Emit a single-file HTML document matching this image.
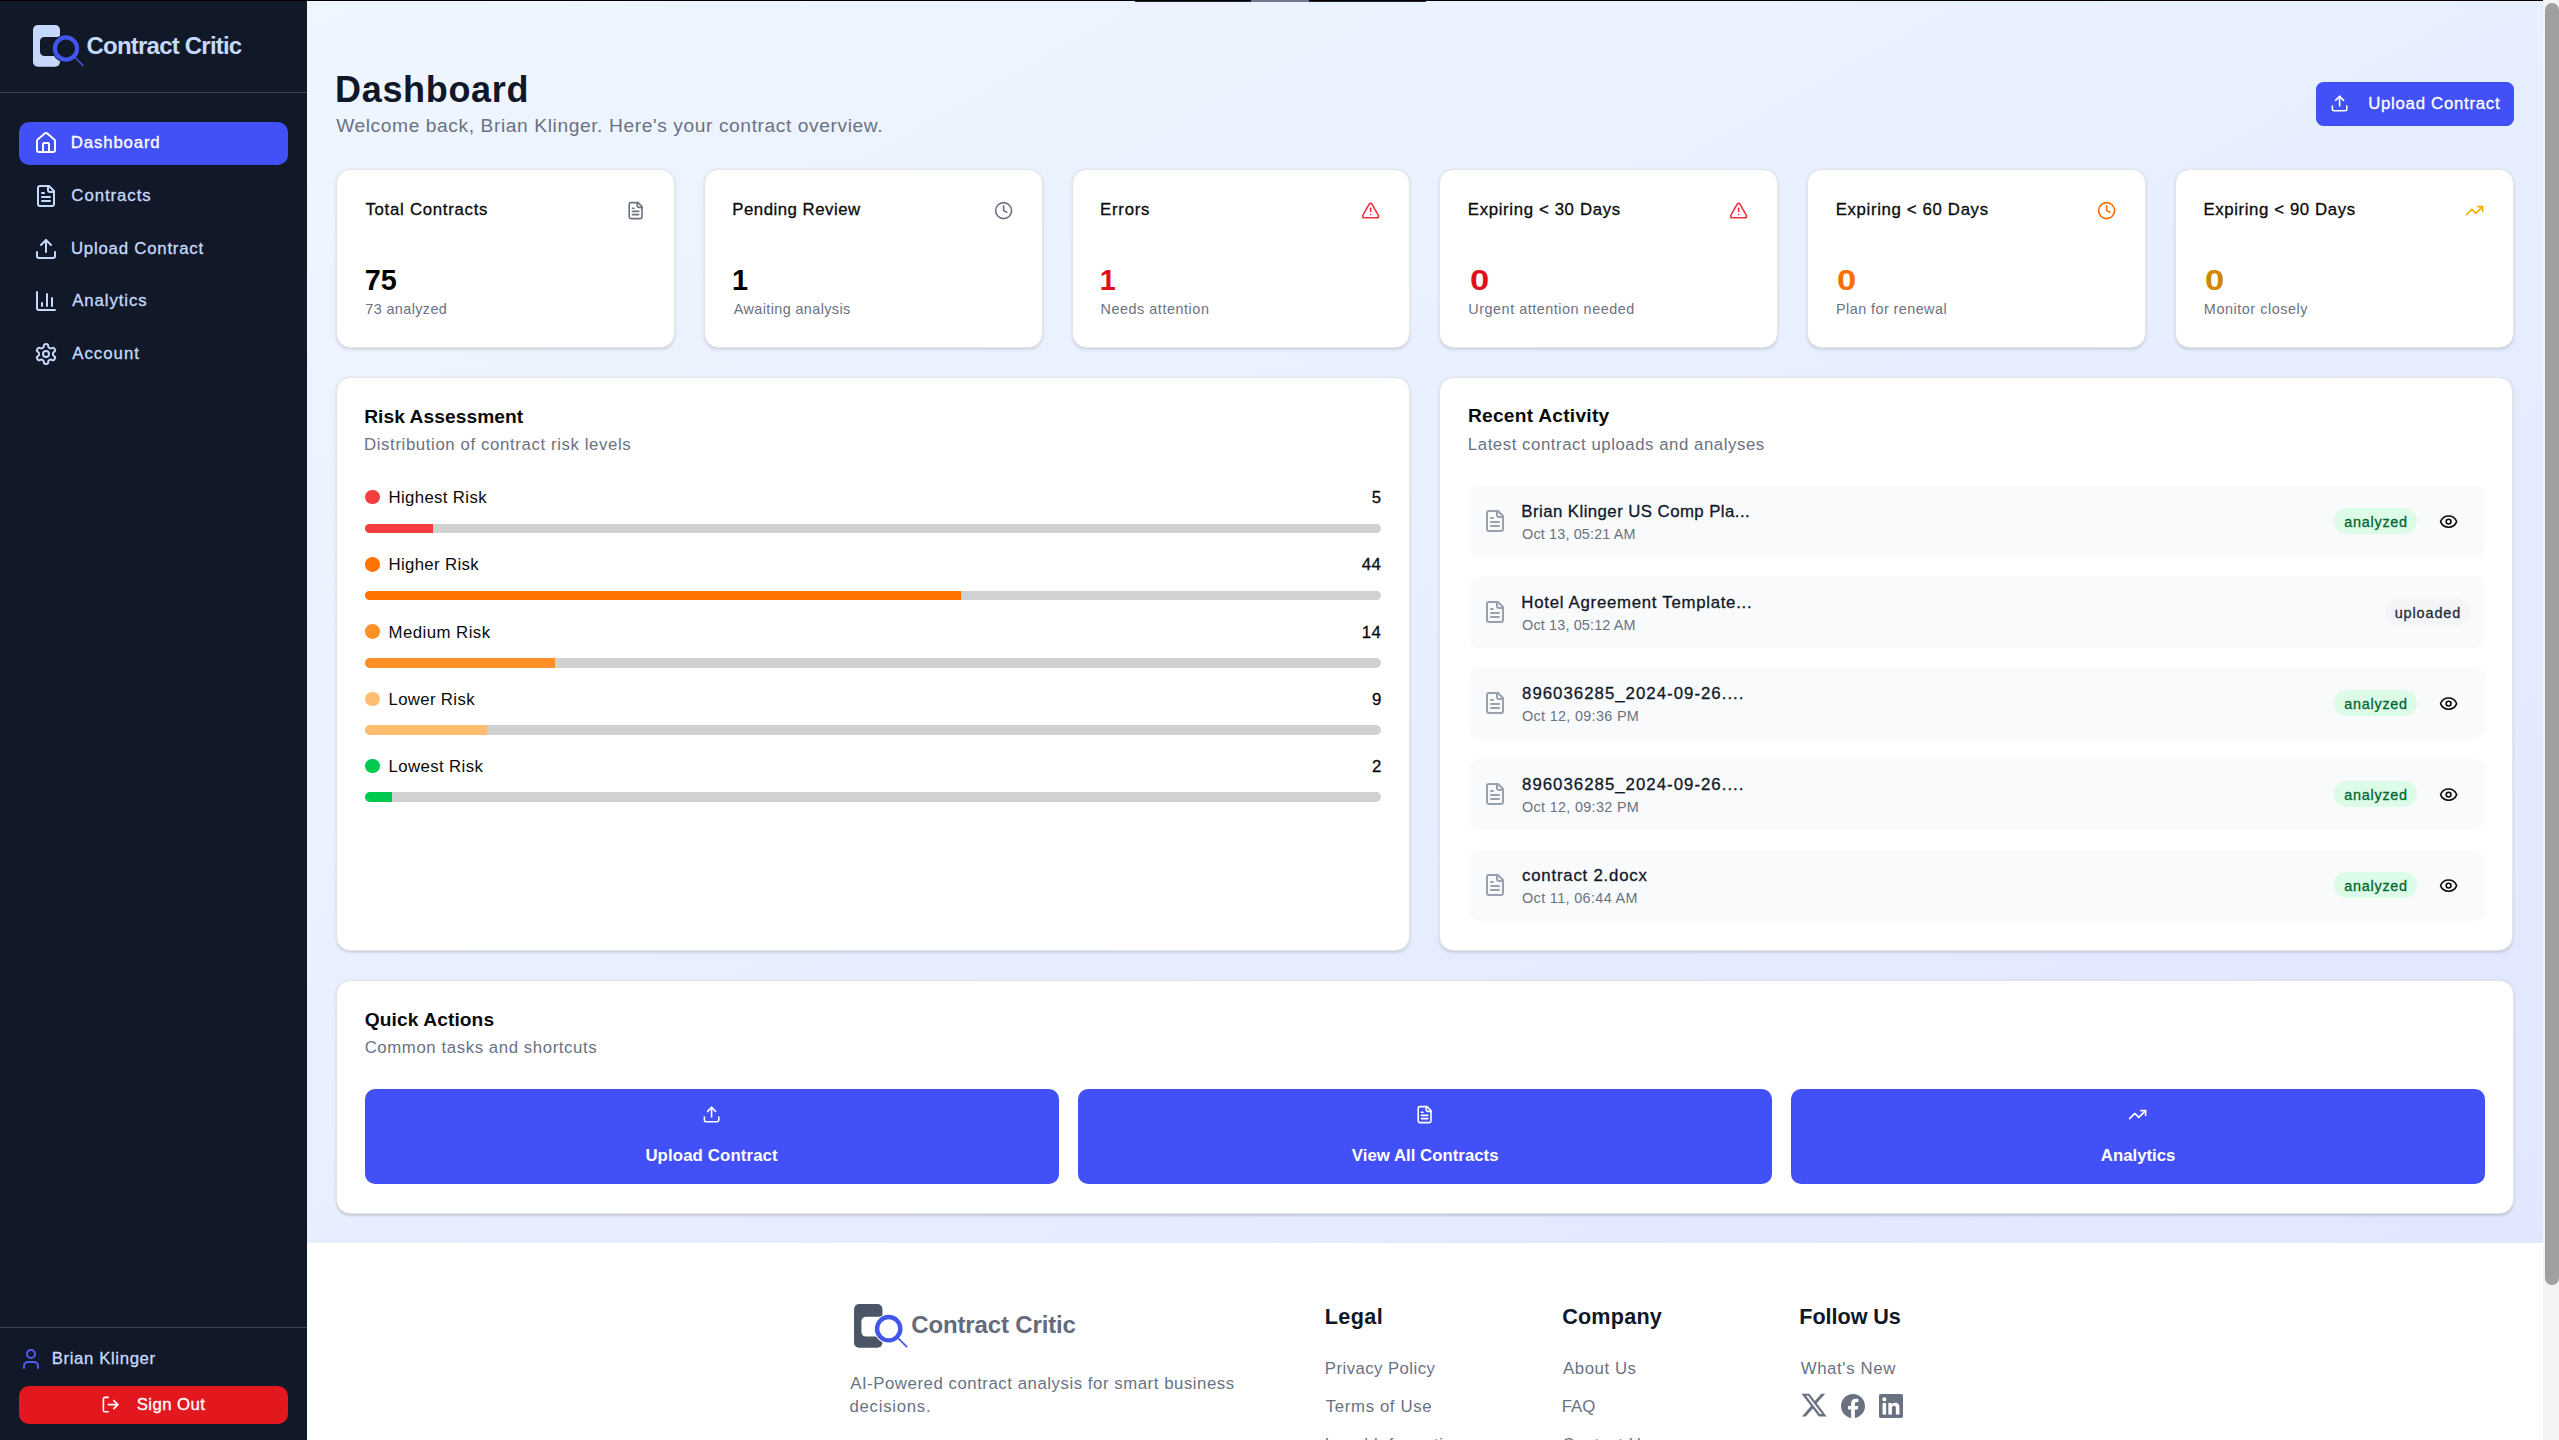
<!DOCTYPE html>
<html><head><meta charset="utf-8">
<style>
*{box-sizing:border-box;margin:0;padding:0}
html,body{width:2559px;height:1440px;overflow:hidden;background:#fff}
body{position:relative;font-family:"Liberation Sans",sans-serif}
.a{position:absolute}
.t{position:absolute;line-height:1;white-space:nowrap}
svg.i{position:absolute;fill:none;stroke:currentColor;stroke-linecap:round;stroke-linejoin:round}
.card{position:absolute;background:#fff;border:1.2px solid #e5e5e5;border-radius:14.4px;box-shadow:0 1.2px 3.6px rgba(0,0,0,.10),0 1.2px 2.4px -1.2px rgba(0,0,0,.10)}
</style></head><body>
<div class="a" style="left:0;top:0;width:307px;height:1440px;background:#111827">
<svg class="a" style="left:32.00px;top:24.00px;width:56.00px;height:46.00px" viewBox="0 0 56 46"><rect x="1" y="1" width="27" height="41.7" rx="4.8" fill="#c5d7fb"/><rect x="8" y="13" width="30" height="19" rx="4.5" fill="#111827"/><circle cx="34" cy="24.5" r="11.1" fill="#111827" stroke="#111827" stroke-width="6"/><circle cx="34" cy="24.5" r="11.1" fill="none" stroke="#4356eb" stroke-width="4.2"/><line x1="42" y1="32.5" x2="51.5" y2="42" stroke="#4356eb" stroke-width="1.6"/></svg>
<div class="t" style="left:86.54px;top:34px;font-size:24px;color:#c6dafd;font-weight:700;letter-spacing:-0.786px;">Contract Critic</div>
<div class="a" style="left:0.00px;top:92.00px;width:307.00px;height:1.20px;background:#374151;border-radius:0px;"></div>
<div class="a" style="left:19.00px;top:122.00px;width:269.00px;height:43.00px;background:#4150f7;border-radius:10px;"></div>
<svg class="i" style="left:34.00px;top:130.50px;width:24px;height:24px;color:#fff;" viewBox="0 0 24 24" stroke-width="2"><path d="M15 21v-8a1 1 0 0 0-1-1h-4a1 1 0 0 0-1 1v8"/><path d="M3 10a2 2 0 0 1 .709-1.528l7-5.999a2 2 0 0 1 2.582 0l7 5.999A2 2 0 0 1 21 10v9a2 2 0 0 1-2 2H5a2 2 0 0 1-2-2z"/></svg>
<div class="t" style="left:70.86px;top:135px;font-size:16.8px;color:#fff;-webkit-text-stroke:0.3px currentColor;letter-spacing:0.838px;">Dashboard</div>
<svg class="i" style="left:34.00px;top:184.30px;width:24px;height:24px;color:#c6dafd;" viewBox="0 0 24 24" stroke-width="2"><path d="M15 2H6a2 2 0 0 0-2 2v16a2 2 0 0 0 2 2h12a2 2 0 0 0 2-2V7Z"/><path d="M14 2v4a2 2 0 0 0 2 2h4"/><path d="M10 9H8"/><path d="M16 13H8"/><path d="M16 17H8"/></svg>
<div class="t" style="left:71.36px;top:188px;font-size:16.8px;color:#c6dafd;-webkit-text-stroke:0.3px currentColor;letter-spacing:0.940px;">Contracts</div>
<svg class="i" style="left:34.00px;top:237.10px;width:24px;height:24px;color:#c6dafd;" viewBox="0 0 24 24" stroke-width="2"><path d="M21 15v4a2 2 0 0 1-2 2H5a2 2 0 0 1-2-2v-4"/><polyline points="17 8 12 3 7 8"/><line x1="12" x2="12" y1="3" y2="15"/></svg>
<div class="t" style="left:70.94px;top:241px;font-size:16.8px;color:#c6dafd;-webkit-text-stroke:0.3px currentColor;letter-spacing:0.783px;">Upload Contract</div>
<svg class="i" style="left:34.00px;top:288.90px;width:24px;height:24px;color:#c6dafd;" viewBox="0 0 24 24" stroke-width="2"><path d="M3 3v16a2 2 0 0 0 2 2h16"/><path d="M18 17V9"/><path d="M13 17V5"/><path d="M8 17v-3"/></svg>
<div class="t" style="left:72.20px;top:293px;font-size:16.8px;color:#c6dafd;-webkit-text-stroke:0.3px currentColor;letter-spacing:0.924px;">Analytics</div>
<svg class="i" style="left:34.00px;top:342.00px;width:24px;height:24px;color:#c6dafd;" viewBox="0 0 24 24" stroke-width="2"><path d="M12.22 2h-.44a2 2 0 0 0-2 2v.18a2 2 0 0 1-1 1.73l-.43.25a2 2 0 0 1-2 0l-.15-.08a2 2 0 0 0-2.730.73l-.22.38a2 2 0 0 0 .73 2.73l.15.1a2 2 0 0 1 1 1.72v.51a2 2 0 0 1-1 1.74l-.15.09a2 2 0 0 0-.73 2.73l.22.38a2 2 0 0 0 2.73.73l.15-.08a2 2 0 0 1 2 0l.43.25a2 2 0 0 1 1 1.73V20a2 2 0 0 0 2 2h.44a2 2 0 0 0 2-2v-.18a2 2 0 0 1 1-1.73l.43-.25a2 2 0 0 1 2 0l.15.08a2 2 0 0 0 2.73-.73l.22-.39a2 2 0 0 0-.73-2.73l-.15-.08a2 2 0 0 1-1-1.74v-.5a2 2 0 0 1 1-1.74l.15-.09a2 2 0 0 0 .73-2.73l-.22-.38a2 2 0 0 0-2.73-.73l-.15.08a2 2 0 0 1-2 0l-.43-.25a2 2 0 0 1-1-1.73V4a2 2 0 0 0-2-2z"/><circle cx="12" cy="12" r="3"/></svg>
<div class="t" style="left:72.20px;top:346px;font-size:16.8px;color:#c6dafd;-webkit-text-stroke:0.3px currentColor;letter-spacing:1.023px;">Account</div>
<div class="a" style="left:0.00px;top:1327.00px;width:307.00px;height:1.20px;background:#374151;border-radius:0px;"></div>
<svg class="i" style="left:19.00px;top:1347.00px;width:24px;height:24px;color:#4f5cf6;" viewBox="0 0 24 24" stroke-width="2"><path d="M19 21v-2a4 4 0 0 0-4-4H9a4 4 0 0 0-4 4v2"/><circle cx="12" cy="7" r="4"/></svg>
<div class="t" style="left:51.66px;top:1351px;font-size:16.8px;color:#c6dafd;-webkit-text-stroke:0.3px currentColor;letter-spacing:0.618px;">Brian Klinger</div>
<div class="a" style="left:19.00px;top:1386.00px;width:269.00px;height:38.00px;background:#e3181f;border-radius:10px;"></div>
<svg class="i" style="left:101.00px;top:1394.50px;width:19.2px;height:19.2px;color:#fff;" viewBox="0 0 24 24" stroke-width="2"><path d="M9 21H5a2 2 0 0 1-2-2V5a2 2 0 0 1 2-2h4"/><polyline points="16 17 21 12 16 7"/><line x1="21" x2="9" y1="12" y2="12"/></svg>
<div class="t" style="left:136.74px;top:1397px;font-size:16.8px;color:#fff;-webkit-text-stroke:0.3px currentColor;letter-spacing:0.427px;">Sign Out</div>
</div>
<div class="a" style="left:307px;top:0;width:2236px;height:1243px;background:linear-gradient(to bottom right,#eff6ff,#e0e7ff)"></div>
<div class="t" style="left:335.06px;top:72px;font-size:36px;color:#101828;font-weight:700;letter-spacing:0.670px;">Dashboard</div>
<div class="t" style="left:336.15px;top:116px;font-size:19.2px;color:#6a7282;letter-spacing:0.594px;">Welcome back, Brian Klinger. Here&#x27;s your contract overview.</div>
<div class="a" style="left:2316.00px;top:82.00px;width:198.00px;height:44.00px;background:#4150f7;border-radius:7.5px;"></div>
<svg class="i" style="left:2329.50px;top:93.70px;width:19.2px;height:19.2px;color:#fff;" viewBox="0 0 24 24" stroke-width="2"><path d="M21 15v4a2 2 0 0 1-2 2H5a2 2 0 0 1-2-2v-4"/><polyline points="17 8 12 3 7 8"/><line x1="12" x2="12" y1="3" y2="15"/></svg>
<div class="t" style="left:2368.14px;top:96px;font-size:16.8px;color:#fff;-webkit-text-stroke:0.3px currentColor;letter-spacing:0.733px;">Upload Contract</div>
<div class="card" style="left:336.00px;top:169px;width:338.8px;height:179px"></div>
<div class="t" style="left:365.46px;top:202px;font-size:16.8px;color:#0a0a0a;-webkit-text-stroke:0.3px currentColor;letter-spacing:0.719px;">Total Contracts</div>
<svg class="i" style="left:625.80px;top:201.00px;width:19.2px;height:19.2px;color:#6b7280;" viewBox="0 0 24 24" stroke-width="2"><path d="M15 2H6a2 2 0 0 0-2 2v16a2 2 0 0 0 2 2h12a2 2 0 0 0 2-2V7Z"/><path d="M14 2v4a2 2 0 0 0 2 2h4"/><path d="M10 9H8"/><path d="M16 13H8"/><path d="M16 17H8"/></svg>
<div class="t" style="left:364.85px;top:266px;font-size:28.8px;color:#000;font-weight:700;">75</div>
<div class="t" style="left:365.28px;top:302px;font-size:14.4px;color:#6a7282;letter-spacing:0.397px;">73 analyzed</div>
<div class="card" style="left:703.80px;top:169px;width:338.8px;height:179px"></div>
<div class="t" style="left:732.26px;top:202px;font-size:16.8px;color:#0a0a0a;-webkit-text-stroke:0.3px currentColor;letter-spacing:0.514px;">Pending Review</div>
<svg class="i" style="left:993.60px;top:201.00px;width:19.2px;height:19.2px;color:#6b7280;" viewBox="0 0 24 24" stroke-width="2"><circle cx="12" cy="12" r="10"/><polyline points="12 6 12 12 16 14"/></svg>
<div class="t" style="left:732.07px;top:266px;font-size:28.8px;color:#000;font-weight:700;">1</div>
<div class="t" style="left:733.80px;top:302px;font-size:14.4px;color:#6a7282;letter-spacing:0.392px;">Awaiting analysis</div>
<div class="card" style="left:1071.60px;top:169px;width:338.8px;height:179px"></div>
<div class="t" style="left:1100.06px;top:202px;font-size:16.8px;color:#0a0a0a;-webkit-text-stroke:0.3px currentColor;letter-spacing:0.747px;">Errors</div>
<svg class="i" style="left:1361.40px;top:201.00px;width:19.2px;height:19.2px;color:#f0313b;" viewBox="0 0 24 24" stroke-width="2"><path d="m21.73 18-8-14a2 2 0 0 0-3.48 0l-8 14A2 2 0 0 0 4 21h16a2 2 0 0 0 1.73-3"/><path d="M12 9v4"/><path d="M12 17h.01"/></svg>
<div class="t" style="left:1099.87px;top:266px;font-size:28.8px;color:#e0101a;font-weight:700;">1</div>
<div class="t" style="left:1100.45px;top:302px;font-size:14.4px;color:#6a7282;letter-spacing:0.546px;">Needs attention</div>
<div class="card" style="left:1439.40px;top:169px;width:338.8px;height:179px"></div>
<div class="t" style="left:1467.86px;top:202px;font-size:16.8px;color:#0a0a0a;-webkit-text-stroke:0.3px currentColor;letter-spacing:0.640px;">Expiring &lt; 30 Days</div>
<svg class="i" style="left:1729.20px;top:201.00px;width:19.2px;height:19.2px;color:#f0313b;" viewBox="0 0 24 24" stroke-width="2"><path d="m21.73 18-8-14a2 2 0 0 0-3.48 0l-8 14A2 2 0 0 0 4 21h16a2 2 0 0 0 1.73-3"/><path d="M12 9v4"/><path d="M12 17h.01"/></svg>
<div class="t" style="left:1469.52px;top:266px;font-size:28.8px;color:#e0101a;font-weight:700;transform:scale(1.2,1.05);transform-origin:0 24px;">0</div>
<div class="t" style="left:1468.32px;top:302px;font-size:14.4px;color:#6a7282;letter-spacing:0.524px;">Urgent attention needed</div>
<div class="card" style="left:1807.20px;top:169px;width:338.8px;height:179px"></div>
<div class="t" style="left:1835.66px;top:202px;font-size:16.8px;color:#0a0a0a;-webkit-text-stroke:0.3px currentColor;letter-spacing:0.652px;">Expiring &lt; 60 Days</div>
<svg class="i" style="left:2097.00px;top:201.00px;width:19.2px;height:19.2px;color:#ff6a00;" viewBox="0 0 24 24" stroke-width="2"><circle cx="12" cy="12" r="10"/><polyline points="12 6 12 12 16 14"/></svg>
<div class="t" style="left:1837.32px;top:266px;font-size:28.8px;color:#ff6c00;font-weight:700;transform:scale(1.2,1.05);transform-origin:0 24px;">0</div>
<div class="t" style="left:1836.05px;top:302px;font-size:14.4px;color:#6a7282;letter-spacing:0.437px;">Plan for renewal</div>
<div class="card" style="left:2175.00px;top:169px;width:338.8px;height:179px"></div>
<div class="t" style="left:2203.46px;top:202px;font-size:16.8px;color:#0a0a0a;-webkit-text-stroke:0.3px currentColor;letter-spacing:0.610px;">Expiring &lt; 90 Days</div>
<svg class="i" style="left:2464.80px;top:201.00px;width:19.2px;height:19.2px;color:#f0b100;" viewBox="0 0 24 24" stroke-width="2"><polyline points="22 7 13.5 15.5 8.5 10.5 2 17"/><polyline points="16 7 22 7 22 13"/></svg>
<div class="t" style="left:2205.12px;top:266px;font-size:28.8px;color:#d08700;font-weight:700;transform:scale(1.2,1.05);transform-origin:0 24px;">0</div>
<div class="t" style="left:2203.85px;top:302px;font-size:14.4px;color:#6a7282;letter-spacing:0.550px;">Monitor closely</div>
<div class="card" style="left:336px;top:377px;width:1073.6px;height:574px"></div>
<div class="t" style="left:364.15px;top:407px;font-size:19.2px;color:#0a0a0a;font-weight:700;letter-spacing:0.059px;">Risk Assessment</div>
<div class="t" style="left:364.06px;top:437px;font-size:16.8px;color:#6a7282;letter-spacing:0.611px;">Distribution of contract risk levels</div>
<div class="a" style="left:365.20px;top:489.90px;width:14.60px;height:14.60px;background:#f53c3f;border-radius:7.3px;"></div>
<div class="t" style="left:388.46px;top:490px;font-size:16.8px;color:#0a0a0a;letter-spacing:0.356px;">Highest Risk</div>
<div class="t" style="left:1371.85px;top:490px;font-size:16.8px;color:#0a0a0a;-webkit-text-stroke:0.3px currentColor;letter-spacing:0.400px;">5</div>
<div class="a" style="left:365px;top:523.60px;width:1016px;height:9.6px;background:#d1d1d1;border-radius:5px;overflow:hidden"><div style="width:67.73px;height:100%;background:#f53c3f"></div></div>
<div class="a" style="left:365.20px;top:557.10px;width:14.60px;height:14.60px;background:#ff7300;border-radius:7.3px;"></div>
<div class="t" style="left:388.46px;top:557px;font-size:16.8px;color:#0a0a0a;letter-spacing:0.349px;">Higher Risk</div>
<div class="t" style="left:1361.87px;top:557px;font-size:16.8px;color:#0a0a0a;-webkit-text-stroke:0.3px currentColor;letter-spacing:0.400px;">44</div>
<div class="a" style="left:365px;top:590.80px;width:1016px;height:9.6px;background:#d1d1d1;border-radius:5px;overflow:hidden"><div style="width:596.05px;height:100%;background:#ff7300"></div></div>
<div class="a" style="left:365.20px;top:624.30px;width:14.60px;height:14.60px;background:#ff9026;border-radius:7.3px;"></div>
<div class="t" style="left:388.46px;top:625px;font-size:16.8px;color:#0a0a0a;letter-spacing:0.464px;">Medium Risk</div>
<div class="t" style="left:1361.87px;top:625px;font-size:16.8px;color:#0a0a0a;-webkit-text-stroke:0.3px currentColor;letter-spacing:0.400px;">14</div>
<div class="a" style="left:365px;top:658.00px;width:1016px;height:9.6px;background:#d1d1d1;border-radius:5px;overflow:hidden"><div style="width:189.65px;height:100%;background:#ff9026"></div></div>
<div class="a" style="left:365.20px;top:691.50px;width:14.60px;height:14.60px;background:#ffbd6f;border-radius:7.3px;"></div>
<div class="t" style="left:388.46px;top:692px;font-size:16.8px;color:#0a0a0a;letter-spacing:0.341px;">Lower Risk</div>
<div class="t" style="left:1371.93px;top:692px;font-size:16.8px;color:#0a0a0a;-webkit-text-stroke:0.3px currentColor;letter-spacing:0.400px;">9</div>
<div class="a" style="left:365px;top:725.20px;width:1016px;height:9.6px;background:#d1d1d1;border-radius:5px;overflow:hidden"><div style="width:121.92px;height:100%;background:#ffbd6f"></div></div>
<div class="a" style="left:365.20px;top:758.70px;width:14.60px;height:14.60px;background:#00c950;border-radius:7.3px;"></div>
<div class="t" style="left:388.46px;top:759px;font-size:16.8px;color:#0a0a0a;letter-spacing:0.389px;">Lowest Risk</div>
<div class="t" style="left:1372.02px;top:759px;font-size:16.8px;color:#0a0a0a;-webkit-text-stroke:0.3px currentColor;letter-spacing:0.400px;">2</div>
<div class="a" style="left:365px;top:792.40px;width:1016px;height:9.6px;background:#d1d1d1;border-radius:5px;overflow:hidden"><div style="width:27.09px;height:100%;background:#00c950"></div></div>
<div class="card" style="left:1439.2px;top:377px;width:1074px;height:574px"></div>
<div class="t" style="left:1467.95px;top:406px;font-size:19.2px;color:#0a0a0a;font-weight:700;letter-spacing:0.242px;">Recent Activity</div>
<div class="t" style="left:1467.86px;top:437px;font-size:16.8px;color:#6a7282;letter-spacing:0.550px;">Latest contract uploads and analyses</div>
<div class="a" style="left:1469.00px;top:486.00px;width:1015.70px;height:71.00px;background:#f9fafb;border-radius:10px;"></div>
<svg class="i" style="left:1483.00px;top:509.00px;width:24px;height:24px;color:#99a1af;" viewBox="0 0 24 24" stroke-width="2"><path d="M15 2H6a2 2 0 0 0-2 2v16a2 2 0 0 0 2 2h12a2 2 0 0 0 2-2V7Z"/><path d="M14 2v4a2 2 0 0 0 2 2h4"/><path d="M10 9H8"/><path d="M16 13H8"/><path d="M16 17H8"/></svg>
<div class="t" style="left:1521.36px;top:504px;font-size:16.8px;color:#101828;-webkit-text-stroke:0.3px currentColor;letter-spacing:0.441px;">Brian Klinger US Comp Pla...</div>
<div class="t" style="left:1522.05px;top:527px;font-size:14.4px;color:#6a7282;letter-spacing:0.157px;">Oct 13, 05:21 AM</div>
<div class="a" style="left:2334.00px;top:508.00px;width:83.00px;height:26.00px;background:#dcfce7;border-radius:13px;"></div>
<div class="t" style="left:2344.32px;top:515px;font-size:14.4px;color:#016630;-webkit-text-stroke:0.3px currentColor;letter-spacing:0.734px;">analyzed</div>
<svg class="i" style="left:2438.50px;top:511.90px;width:19.2px;height:19.2px;color:#0a0a0a;" viewBox="0 0 24 24" stroke-width="2"><path d="M2.062 12.348a1 1 0 0 1 0-.696 10.75 10.75 0 0 1 19.876 0 1 1 0 0 1 0 .696 10.75 10.75 0 0 1-19.876 0"/><circle cx="12" cy="12" r="3"/></svg>
<div class="a" style="left:1469.00px;top:577.00px;width:1015.70px;height:71.00px;background:#f9fafb;border-radius:10px;"></div>
<svg class="i" style="left:1483.00px;top:600.00px;width:24px;height:24px;color:#99a1af;" viewBox="0 0 24 24" stroke-width="2"><path d="M15 2H6a2 2 0 0 0-2 2v16a2 2 0 0 0 2 2h12a2 2 0 0 0 2-2V7Z"/><path d="M14 2v4a2 2 0 0 0 2 2h4"/><path d="M10 9H8"/><path d="M16 13H8"/><path d="M16 17H8"/></svg>
<div class="t" style="left:1521.36px;top:595px;font-size:16.8px;color:#101828;-webkit-text-stroke:0.3px currentColor;letter-spacing:0.722px;">Hotel Agreement Template...</div>
<div class="t" style="left:1522.05px;top:618px;font-size:14.4px;color:#6a7282;letter-spacing:0.157px;">Oct 13, 05:12 AM</div>
<div class="a" style="left:2385.00px;top:599.00px;width:84.50px;height:26.00px;background:#f3f4f6;border-radius:13px;"></div>
<div class="t" style="left:2394.66px;top:606px;font-size:14.4px;color:#1e2939;-webkit-text-stroke:0.3px currentColor;letter-spacing:0.906px;">uploaded</div>
<div class="a" style="left:1469.00px;top:668.00px;width:1015.70px;height:71.00px;background:#f9fafb;border-radius:10px;"></div>
<svg class="i" style="left:1483.00px;top:691.00px;width:24px;height:24px;color:#99a1af;" viewBox="0 0 24 24" stroke-width="2"><path d="M15 2H6a2 2 0 0 0-2 2v16a2 2 0 0 0 2 2h12a2 2 0 0 0 2-2V7Z"/><path d="M14 2v4a2 2 0 0 0 2 2h4"/><path d="M10 9H8"/><path d="M16 13H8"/><path d="M16 17H8"/></svg>
<div class="t" style="left:1522.03px;top:686px;font-size:16.8px;color:#101828;-webkit-text-stroke:0.3px currentColor;letter-spacing:1.027px;">896036285_2024-09-26....</div>
<div class="t" style="left:1522.05px;top:709px;font-size:14.4px;color:#6a7282;letter-spacing:0.318px;">Oct 12, 09:36 PM</div>
<div class="a" style="left:2334.00px;top:690.00px;width:83.00px;height:26.00px;background:#dcfce7;border-radius:13px;"></div>
<div class="t" style="left:2344.32px;top:697px;font-size:14.4px;color:#016630;-webkit-text-stroke:0.3px currentColor;letter-spacing:0.734px;">analyzed</div>
<svg class="i" style="left:2438.50px;top:693.90px;width:19.2px;height:19.2px;color:#0a0a0a;" viewBox="0 0 24 24" stroke-width="2"><path d="M2.062 12.348a1 1 0 0 1 0-.696 10.75 10.75 0 0 1 19.876 0 1 1 0 0 1 0 .696 10.75 10.75 0 0 1-19.876 0"/><circle cx="12" cy="12" r="3"/></svg>
<div class="a" style="left:1469.00px;top:759.00px;width:1015.70px;height:71.00px;background:#f9fafb;border-radius:10px;"></div>
<svg class="i" style="left:1483.00px;top:782.00px;width:24px;height:24px;color:#99a1af;" viewBox="0 0 24 24" stroke-width="2"><path d="M15 2H6a2 2 0 0 0-2 2v16a2 2 0 0 0 2 2h12a2 2 0 0 0 2-2V7Z"/><path d="M14 2v4a2 2 0 0 0 2 2h4"/><path d="M10 9H8"/><path d="M16 13H8"/><path d="M16 17H8"/></svg>
<div class="t" style="left:1522.03px;top:777px;font-size:16.8px;color:#101828;-webkit-text-stroke:0.3px currentColor;letter-spacing:1.027px;">896036285_2024-09-26....</div>
<div class="t" style="left:1522.05px;top:800px;font-size:14.4px;color:#6a7282;letter-spacing:0.318px;">Oct 12, 09:32 PM</div>
<div class="a" style="left:2334.00px;top:781.00px;width:83.00px;height:26.00px;background:#dcfce7;border-radius:13px;"></div>
<div class="t" style="left:2344.32px;top:788px;font-size:14.4px;color:#016630;-webkit-text-stroke:0.3px currentColor;letter-spacing:0.734px;">analyzed</div>
<svg class="i" style="left:2438.50px;top:784.90px;width:19.2px;height:19.2px;color:#0a0a0a;" viewBox="0 0 24 24" stroke-width="2"><path d="M2.062 12.348a1 1 0 0 1 0-.696 10.75 10.75 0 0 1 19.876 0 1 1 0 0 1 0 .696 10.75 10.75 0 0 1-19.876 0"/><circle cx="12" cy="12" r="3"/></svg>
<div class="a" style="left:1469.00px;top:850.00px;width:1015.70px;height:71.00px;background:#f9fafb;border-radius:10px;"></div>
<svg class="i" style="left:1483.00px;top:873.00px;width:24px;height:24px;color:#99a1af;" viewBox="0 0 24 24" stroke-width="2"><path d="M15 2H6a2 2 0 0 0-2 2v16a2 2 0 0 0 2 2h12a2 2 0 0 0 2-2V7Z"/><path d="M14 2v4a2 2 0 0 0 2 2h4"/><path d="M10 9H8"/><path d="M16 13H8"/><path d="M16 17H8"/></svg>
<div class="t" style="left:1522.03px;top:868px;font-size:16.8px;color:#101828;-webkit-text-stroke:0.3px currentColor;letter-spacing:0.788px;">contract 2.docx</div>
<div class="t" style="left:1522.05px;top:891px;font-size:14.4px;color:#6a7282;letter-spacing:0.356px;">Oct 11, 06:44 AM</div>
<div class="a" style="left:2334.00px;top:872.00px;width:83.00px;height:26.00px;background:#dcfce7;border-radius:13px;"></div>
<div class="t" style="left:2344.32px;top:879px;font-size:14.4px;color:#016630;-webkit-text-stroke:0.3px currentColor;letter-spacing:0.734px;">analyzed</div>
<svg class="i" style="left:2438.50px;top:875.90px;width:19.2px;height:19.2px;color:#0a0a0a;" viewBox="0 0 24 24" stroke-width="2"><path d="M2.062 12.348a1 1 0 0 1 0-.696 10.75 10.75 0 0 1 19.876 0 1 1 0 0 1 0 .696 10.75 10.75 0 0 1-19.876 0"/><circle cx="12" cy="12" r="3"/></svg>
<div class="card" style="left:336px;top:980px;width:2177.6px;height:234px"></div>
<div class="t" style="left:364.73px;top:1010px;font-size:19.2px;color:#0a0a0a;font-weight:700;letter-spacing:0.090px;">Quick Actions</div>
<div class="t" style="left:364.66px;top:1040px;font-size:16.8px;color:#6a7282;letter-spacing:0.587px;">Common tasks and shortcuts</div>
<div class="a" style="left:365.00px;top:1089.00px;width:694.00px;height:95.00px;background:#4150f7;border-radius:10px;"></div>
<svg class="i" style="left:702.40px;top:1104.80px;width:19.2px;height:19.2px;color:#fff;" viewBox="0 0 24 24" stroke-width="2"><path d="M21 15v4a2 2 0 0 1-2 2H5a2 2 0 0 1-2-2v-4"/><polyline points="17 8 12 3 7 8"/><line x1="12" x2="12" y1="3" y2="15"/></svg>
<div class="t" style="left:645.39px;top:1148px;font-size:16.8px;color:#fff;font-weight:700;letter-spacing:0.125px;">Upload Contract</div>
<div class="a" style="left:1078.00px;top:1089.00px;width:694.00px;height:95.00px;background:#4150f7;border-radius:10px;"></div>
<svg class="i" style="left:1415.40px;top:1104.80px;width:19.2px;height:19.2px;color:#fff;" viewBox="0 0 24 24" stroke-width="2"><path d="M15 2H6a2 2 0 0 0-2 2v16a2 2 0 0 0 2 2h12a2 2 0 0 0 2-2V7Z"/><path d="M14 2v4a2 2 0 0 0 2 2h4"/><path d="M10 9H8"/><path d="M16 13H8"/><path d="M16 17H8"/></svg>
<div class="t" style="left:1351.87px;top:1148px;font-size:16.8px;color:#fff;font-weight:700;letter-spacing:0.016px;">View All Contracts</div>
<div class="a" style="left:1791.00px;top:1089.00px;width:694.00px;height:95.00px;background:#4150f7;border-radius:10px;"></div>
<svg class="i" style="left:2128.40px;top:1104.80px;width:19.2px;height:19.2px;color:#fff;" viewBox="0 0 24 24" stroke-width="2"><polyline points="22 7 13.5 15.5 8.5 10.5 2 17"/><polyline points="16 7 22 7 22 13"/></svg>
<div class="t" style="left:2100.79px;top:1148px;font-size:16.8px;color:#fff;font-weight:700;">Analytics</div>

<div class="a" style="left:307px;top:1243px;width:2236px;height:197px;background:#fff"></div>
<svg class="a" style="left:853.35px;top:1303.35px;width:58.80px;height:48.30px" viewBox="0 0 56 46"><rect x="1" y="1" width="27" height="41.7" rx="4.8" fill="#4a5565"/><rect x="8" y="13" width="30" height="19" rx="4.5" fill="#ffffff"/><circle cx="34" cy="24.5" r="11.1" fill="#ffffff" stroke="#ffffff" stroke-width="6"/><circle cx="34" cy="24.5" r="11.1" fill="none" stroke="#4356eb" stroke-width="4.2"/><line x1="42" y1="32.5" x2="51.5" y2="42" stroke="#4356eb" stroke-width="1.6"/></svg>
<div class="t" style="left:911.34px;top:1313px;font-size:24px;color:#636b7c;font-weight:700;letter-spacing:-0.150px;">Contract Critic</div>
<div class="t" style="left:850.20px;top:1376px;font-size:16.8px;color:#6a7282;letter-spacing:0.541px;">AI-Powered contract analysis for smart business</div>
<div class="t" style="left:849.53px;top:1399px;font-size:16.8px;color:#6a7282;letter-spacing:0.714px;">decisions.</div>
<div class="t" style="left:1324.80px;top:1306px;font-size:21.6px;color:#101828;font-weight:700;letter-spacing:0.358px;">Legal</div>
<div class="t" style="left:1324.86px;top:1361px;font-size:16.8px;color:#6a7282;letter-spacing:0.428px;">Privacy Policy</div>
<div class="t" style="left:1325.86px;top:1399px;font-size:16.8px;color:#6a7282;letter-spacing:0.619px;">Terms of Use</div>
<div class="t" style="left:1324.86px;top:1437px;font-size:16.8px;color:#6a7282;letter-spacing:0.504px;">Legal Information</div>
<div class="t" style="left:1562.14px;top:1306px;font-size:21.6px;color:#101828;font-weight:700;letter-spacing:0.222px;">Company</div>
<div class="t" style="left:1563.00px;top:1361px;font-size:16.8px;color:#6a7282;letter-spacing:0.565px;">About Us</div>
<div class="t" style="left:1561.66px;top:1399px;font-size:16.8px;color:#6a7282;">FAQ</div>
<div class="t" style="left:1562.16px;top:1437px;font-size:16.8px;color:#6a7282;letter-spacing:0.504px;">Contact Us</div>
<div class="t" style="left:1799.35px;top:1306px;font-size:21.6px;color:#101828;font-weight:700;letter-spacing:-0.054px;">Follow Us</div>
<div class="t" style="left:1800.67px;top:1361px;font-size:16.8px;color:#6a7282;letter-spacing:0.634px;">What&#x27;s New</div>
<svg class="a" style="left:1799.5px;top:1391.1px;width:28px;height:28px" viewBox="0 0 24 24"><path fill="#6a7282" d="M18.244 2.25h3.308l-7.227 8.26 8.502 11.24H16.17l-5.214-6.817L4.99 21.75H1.68l7.73-8.835L1.254 2.25H8.08l4.713 6.231zm-1.161 17.52h1.833L7.084 4.126H5.117z"/></svg>
<svg class="a" style="left:1841px;top:1393.5px;width:24px;height:24px" viewBox="0 0 24 24"><path fill="#6a7282" d="M24 12.073C24 5.405 18.627 0 12 0S0 5.405 0 12.073C0 18.1 4.388 23.094 10.125 24v-8.437H7.078v-3.49h3.047V9.410c0-3.025 1.792-4.697 4.533-4.697 1.312 0 2.686.236 2.686.236v2.971H15.830c-1.491 0-1.956.93-1.956 1.886v2.264h3.328l-.532 3.490h-2.796V24C19.612 23.094 24 18.100 24 12.073z"/></svg>
<svg class="a" style="left:1879px;top:1393.5px;width:24px;height:24px" viewBox="0 0 24 24"><path fill="#6a7282" d="M20.447 20.452h-3.554v-5.569c0-1.328-.027-3.037-1.852-3.037-1.853 0-2.136 1.445-2.136 2.939v5.667H9.351V9h3.414v1.561h.046c.477-.9 1.637-1.850 3.370-1.850 3.601 0 4.267 2.370 4.267 5.455v6.286zM5.337 7.433a2.062 2.062 0 1 1 0-4.125 2.062 2.062 0 0 1 0 4.125zM7.119 20.452H3.555V9h3.564v11.452zM22.225 0H1.771C.792 0 0 .774 0 1.729v20.542C0 23.227.792 24 1.771 24h20.451C23.200 24 24 23.227 24 22.271V1.729C24 .774 23.200 0 22.222 0h.003z"/></svg>

<div class="a" style="left:0;top:0;width:2543px;height:1px;background:#000"></div>
<div class="a" style="left:1135px;top:1px;width:291px;height:1px;background:#1f2430"></div>
<div class="a" style="left:1251px;top:0px;width:58px;height:2px;background:#6f7c8f"></div>
<div class="a" style="left:2543px;top:0;width:16px;height:1440px;background:#f3f3f3"></div>
<div class="a" style="left:2545px;top:3px;width:14px;height:1282px;background:#a0a0a0;border-radius:7px"></div>
</body></html>
